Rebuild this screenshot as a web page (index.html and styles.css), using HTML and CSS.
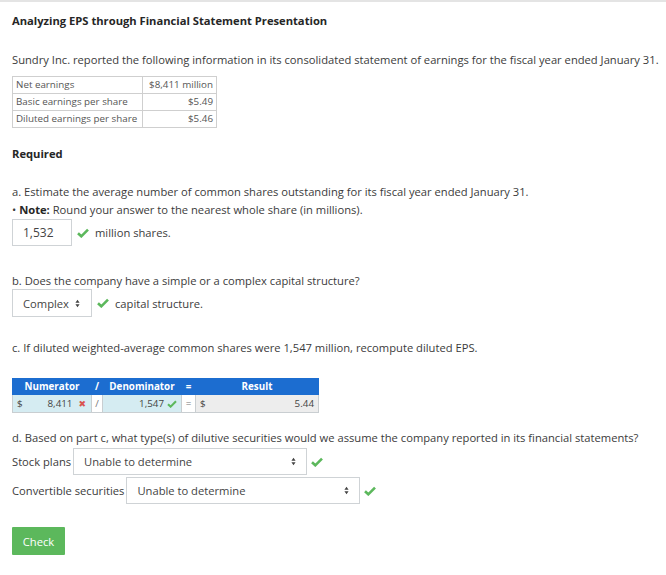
FILE: index.html
```html
<!DOCTYPE html>
<html>
<head>
<meta charset="utf-8">
<link rel="stylesheet" href="styles.css">
</head>
<body>
<div class="page">
  <h1 class="title">Analyzing EPS through Financial Statement Presentation</h1>
  <p class="intro">Sundry Inc. reported the following information in its consolidated statement of earnings for the fiscal year ended January 31.</p>
  <table class="given">
    <tr><td>Net earnings</td><td class="num">$8,411 million</td></tr>
    <tr><td>Basic earnings per share</td><td class="num">$5.49</td></tr>
    <tr><td>Diluted earnings per share</td><td class="num">$5.46</td></tr>
  </table>

  <p class="required">Required</p>

  <p class="qa">a. Estimate the average number of common shares outstanding for its fiscal year ended January 31.</p>
  <p class="note">&bull; <b>Note:</b> Round your answer to the nearest whole share (in millions).</p>
  <div class="answer-row">
    <div class="box input-a">1,532</div>
    <svg class="check" viewBox="0 0 12 10"><path d="M1 5.2 L4.3 8.3 L11 1.6" fill="none" stroke="#5cb85c" stroke-width="2.6"/></svg>
    <span class="after">million shares.</span>
  </div>

  <p class="qb">b. Does the company have a simple or a complex capital structure?</p>
  <div class="answer-row">
    <div class="box select-b">Complex <span class="arrows"><svg viewBox="0 0 6 10"><path d="M3 0.5 L5.5 4 L0.5 4 Z M3 9.5 L5.5 6 L0.5 6 Z" fill="#444"/></svg></span></div>
    <svg class="check" viewBox="0 0 12 10"><path d="M1 5.2 L4.3 8.3 L11 1.6" fill="none" stroke="#5cb85c" stroke-width="2.6"/></svg>
    <span class="after">capital structure.</span>
  </div>

  <p class="qc">c. If diluted weighted-average common shares were 1,547 million, recompute diluted EPS.</p>
  <table class="calc">
    <tr class="head">
      <th class="c-num">Numerator</th>
      <th class="c-op">/</th>
      <th class="c-den">Denominator</th>
      <th class="c-eq">=</th>
      <th class="c-res">Result</th>
    </tr>
    <tr class="vals">
      <td class="c-num blue"><div class="cell"><span>$</span><span class="fill"></span><span>8,411</span><span class="x">&#10006;</span></div></td>
      <td class="c-op op">/</td>
      <td class="c-den blue"><div class="cell"><span class="fill"></span><span>1,547</span><svg class="check small" viewBox="0 0 12 10"><path d="M1 5.2 L4.3 8.3 L11 1.6" fill="none" stroke="#5cb85c" stroke-width="2.6"/></svg></div></td>
      <td class="c-eq op">=</td>
      <td class="c-res grey"><div class="cell"><span>$</span><span class="fill"></span><span>5.44</span></div></td>
    </tr>
  </table>

  <p class="qd">d. Based on part c, what type(s) of dilutive securities would we assume the company reported in its financial statements?</p>
  <div class="sel-row r1">
    <span class="label">Stock plans</span>
    <div class="box select-d w1"><span>Unable to determine</span><span class="arrows"><svg viewBox="0 0 6 10"><path d="M3 0.5 L5.5 4 L0.5 4 Z M3 9.5 L5.5 6 L0.5 6 Z" fill="#444"/></svg></span></div>
    <svg class="check" viewBox="0 0 12 10"><path d="M1 5.2 L4.3 8.3 L11 1.6" fill="none" stroke="#5cb85c" stroke-width="2.6"/></svg>
  </div>
  <div class="sel-row r2">
    <span class="label">Convertible securities</span>
    <div class="box select-d w2"><span>Unable to determine</span><span class="arrows"><svg viewBox="0 0 6 10"><path d="M3 0.5 L5.5 4 L0.5 4 Z M3 9.5 L5.5 6 L0.5 6 Z" fill="#444"/></svg></span></div>
    <svg class="check" viewBox="0 0 12 10"><path d="M1 5.2 L4.3 8.3 L11 1.6" fill="none" stroke="#5cb85c" stroke-width="2.6"/></svg>
  </div>

  <button class="btn">Check</button>
</div>
</body>
</html>
```

FILE: styles.css
```css
html, body {
  margin: 0;
  padding: 0;
  background: #fff;
}
body {
  font-family: "Open Sans", "DejaVu Sans", sans-serif;
  color: #3b3b3b;
  font-size: 11.2px;
}
.page {
  border-top: 2px solid #e4e4e4;
  padding: 11px 2px 0 12px;
}
p { margin: 0; }
.title {
  margin: 0;
  font-size: 11.2px;
  font-weight: 700;
  line-height: 16px;
  color: #262626;
}
.intro {
  margin-top: 22px;
  line-height: 18px;
  white-space: nowrap;
}
.given {
  margin-top: 7px;
  border-collapse: collapse;
  font-size: 9.8px;
  color: #555;
}
.given td {
  border: 1px solid #cfcfcf;
  height: 16px;
  padding: 0 3px;
  line-height: 16px;
}
.given td:first-child { width: 123px; }
.given td.num { text-align: right; width: 67px; }
.required {
  margin-top: 17px;
  font-weight: 700;
  line-height: 18px;
  color: #262626;
}
.qa {
  margin-top: 20px;
  line-height: 18px;
}
.note {
  line-height: 18px;
}
.note b { color: #262626; }
.answer-row {
  display: flex;
  align-items: center;
  margin-top: 0;
}
.box {
  box-sizing: border-box;
  border: 1px solid #cfd3d6;
  background: #fff;
  display: flex;
  align-items: center;
}
.input-a {
  width: 60px;
  height: 27px;
  padding-left: 10px;
  font-size: 12px;
  color: #444;
}
.check {
  width: 12px;
  height: 10px;
  flex: none;
}
.answer-row .check { margin-left: 5px; }
.after { margin-left: 6px; }
.qb {
  margin-top: 27px;
  line-height: 16px;
}
.select-b {
  width: 80px;
  height: 28px;
  padding-left: 10px;
  color: #444;
}
.arrows {
  display: inline-flex;
  margin-left: 6px;
}
.arrows svg { width: 5px; height: 9px; }
.qc {
  margin-top: 23px;
  line-height: 16px;
}
.calc {
  margin-top: 22px;
  border-collapse: collapse;
  font-size: 9.8px;
  width: 307px;
  table-layout: fixed;
}
.calc .head th {
  background: #1c6dd0;
  color: #fff;
  font-weight: 700;
  height: 15px;
  padding: 0;
  line-height: 15px;
  text-align: center;
  border: 1px solid #1c6dd0;
}
.c-num { width: 78px; }
.c-op { width: 10px; }
.c-den { width: 78px; }
.c-eq { width: 13px; }
.c-res { width: auto; }
.calc .vals td {
  height: 17px;
  border: 1px solid #c9ced1;
  padding: 0 4px;
  color: #444;
}
.calc td.blue { background: #d5ecf2; }
.calc td.grey { background: #ededed; }
.calc td.op {
  background: #fff;
  padding: 0 2px;
  color: #777;
  text-align: center;
}
.cell {
  display: flex;
  align-items: center;
}
.cell .fill { flex: 1; }
.x {
  color: #d9534f;
  font-size: 9px;
  margin-left: 6px;
  margin-right: 1px;
}
.check.small {
  width: 10px;
  height: 8px;
  margin-left: 3px;
}
.qd {
  margin-top: 17px;
  line-height: 16px;
}
.sel-row {
  display: flex;
  align-items: center;
}
.sel-row.r1 { margin-top: 2px; }
.sel-row.r2 { margin-top: 2px; }
.label { margin-right: 2px; }
.select-d {
  height: 27px;
  padding: 0 10px;
  justify-content: space-between;
  color: #444;
}
.select-d .arrows { margin-left: 0; }
.w1 { width: 234px; }
.w2 { width: 234px; }
.sel-row .check { margin-left: 4px; }
.btn {
  display: block;
  margin-top: 23px;
  width: 53px;
  height: 28px;
  border: none;
  background: #5cb85c;
  color: #fff;
  font-family: "Open Sans", "DejaVu Sans", sans-serif;
  font-size: 11.2px;
  padding: 0;
  border-radius: 1px;
}
```
